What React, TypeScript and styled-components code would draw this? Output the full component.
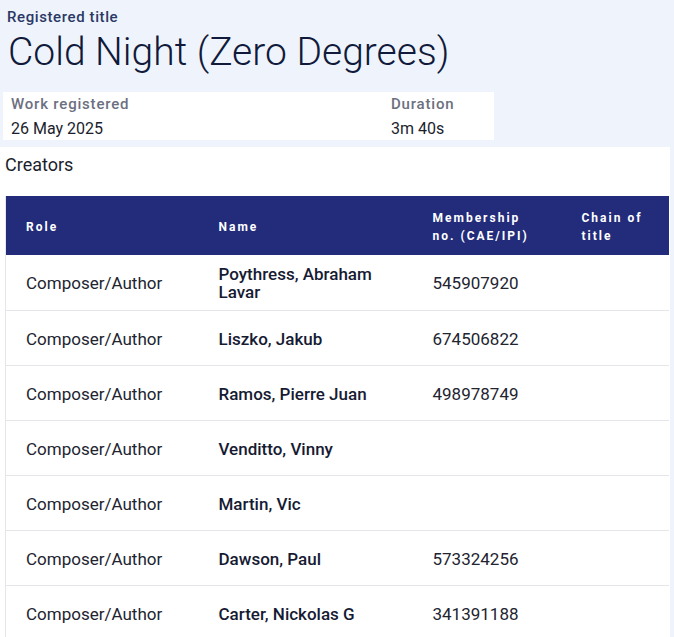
import React from "react";
import styled, { createGlobalStyle } from "styled-components";

const Global = createGlobalStyle`
  html, body { margin: 0; padding: 0; background: #eff4fc; }
  body { font-family: Roboto, "Liberation Sans", sans-serif; }
`;

const Page = styled.div`
  width: 674px;
  min-height: 637px;
  background: #eff4fc;
  overflow: hidden;
`;

const Header = styled.header`
  padding: 8px 7px 0 7px;
`;

const Eyebrow = styled.div`
  font-size: 15px;
  line-height: 18px;
  font-weight: 500;
  color: #2a3866;
  letter-spacing: 0.6px;
`;

const Title = styled.h1`
  margin: 0;
  font-size: 39px;
  line-height: 52px;
  font-weight: 300;
  color: #111a3a;
  padding-left: 1px;
`;

const InfoBox = styled.div`
  margin: 14px 0 0 -4px;
  width: 491px;
  height: 48px;
  background: #ffffff;
  display: grid;
  grid-template-columns: 380px 1fr;
  box-sizing: border-box;
  padding: 2px 8px 0 8px;
`;

const InfoItem = styled.div`
  display: flex;
  flex-direction: column;
`;

const InfoLabel = styled.span`
  font-size: 15px;
  line-height: 20px;
  font-weight: 500;
  color: #6c6f80;
  letter-spacing: 0.8px;
`;

const InfoValue = styled.span`
  font-size: 16px;
  line-height: 20px;
  color: #1b1e2c;
  margin-top: 5px;
`;

const Section = styled.section`
  margin-top: 7px;
  width: 670px;
  background: #ffffff;
  padding: 6px 0 0 5px;
  box-sizing: border-box;
`;

const SectionTitle = styled.h2`
  margin: 0;
  font-size: 18px;
  line-height: 24px;
  font-weight: 400;
  color: #1b1e2c;
  height: 43px;
`;

const Table = styled.table`
  width: 664px;
  border-collapse: collapse;
  table-layout: fixed;
  border-left: 1px solid #e4e6ea;
`;

const Th = styled.th<{ $w?: number }>`
  ${(p) => (p.$w ? `width: ${p.$w}px;` : "")}
  background: #222c7a;
  color: #ffffff;
  text-align: left;
  font-size: 12px;
  line-height: 18px;
  font-weight: 700;
  letter-spacing: 2px;
  padding: 2px 20px 0 20px;
  height: 59px;
  box-sizing: border-box;
  vertical-align: middle;
`;

const Tr = styled.tr`
  border-bottom: 1px solid #e4e6ea;
`;

const Td = styled.td<{ $bold?: boolean }>`
  height: 55px;
  box-sizing: border-box;
  padding: 2px 20px 0 20px;
  font-size: 17px;
  line-height: 18px;
  font-weight: ${(p) => (p.$bold ? 500 : 400)};
  color: ${(p) => (p.$bold ? "#161b33" : "#222430")};
  vertical-align: middle;
`;

const rows: [string, string, string][] = [
  ["Composer/Author", "Poythress, Abraham Lavar", "545907920"],
  ["Composer/Author", "Liszko, Jakub", "674506822"],
  ["Composer/Author", "Ramos, Pierre Juan", "498978749"],
  ["Composer/Author", "Venditto, Vinny", ""],
  ["Composer/Author", "Martin, Vic", ""],
  ["Composer/Author", "Dawson, Paul", "573324256"],
  ["Composer/Author", "Carter, Nickolas G", "341391188"],
];

export default function App() {
  return (
    <Page>
      <Global />
      <Header>
        <Eyebrow>Registered title</Eyebrow>
        <Title>Cold Night (Zero Degrees)</Title>
        <InfoBox>
          <InfoItem>
            <InfoLabel>Work registered</InfoLabel>
            <InfoValue>26 May 2025</InfoValue>
          </InfoItem>
          <InfoItem>
            <InfoLabel>Duration</InfoLabel>
            <InfoValue>3m 40s</InfoValue>
          </InfoItem>
        </InfoBox>
      </Header>
      <Section>
        <SectionTitle>Creators</SectionTitle>
        <Table>
          <thead>
            <tr>
              <Th $w={193}>Role</Th>
              <Th $w={214}>Name</Th>
              <Th $w={149}>Membership no. (CAE/IPI)</Th>
              <Th>Chain of title</Th>
            </tr>
          </thead>
          <tbody>
            {rows.map(([role, name, no], i) => (
              <Tr key={i}>
                <Td>{role}</Td>
                <Td $bold>{name}</Td>
                <Td>{no}</Td>
                <Td />
              </Tr>
            ))}
          </tbody>
        </Table>
      </Section>
    </Page>
  );
}
